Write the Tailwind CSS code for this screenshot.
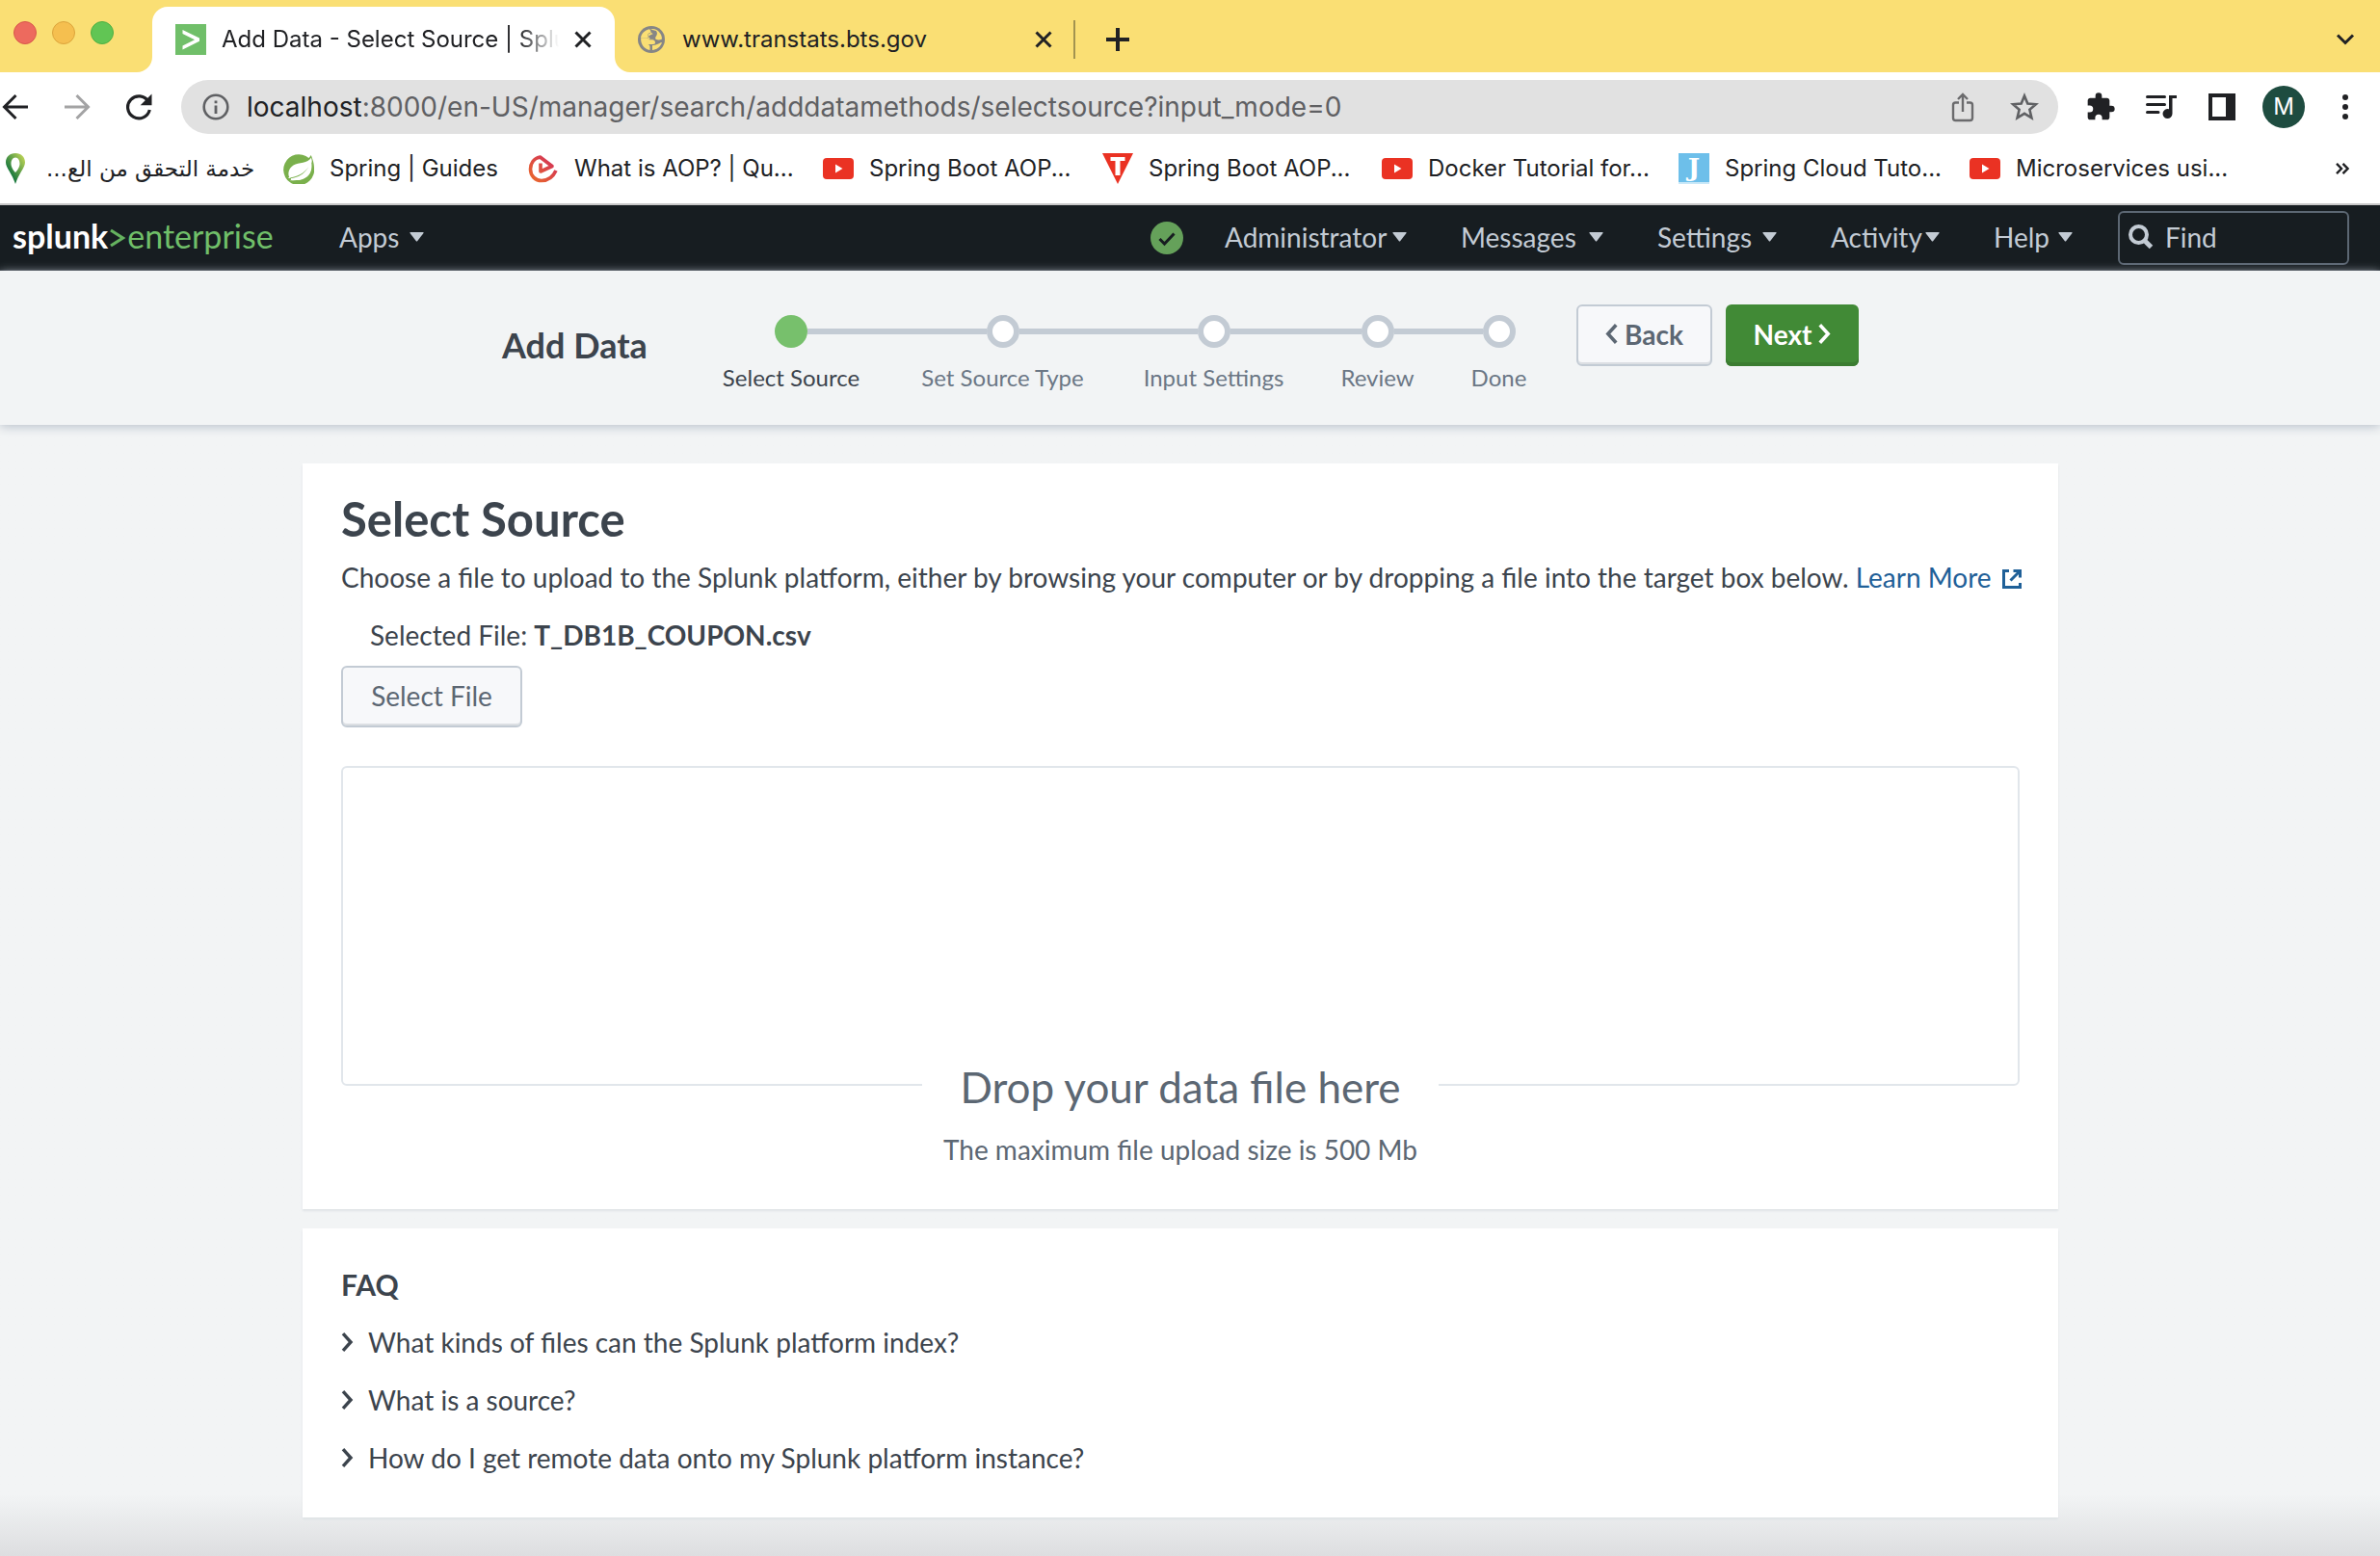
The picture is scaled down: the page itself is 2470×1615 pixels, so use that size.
<!DOCTYPE html>
<html lang="en">
<head>
<meta charset="utf-8">
<title>Add Data - Select Source | Splunk</title>
<script src="https://cdn.jsdelivr.net/npm/@tailwindcss/browser@4"></script>
</head>
<body class="min-h-screen flex flex-col bg-[#f2f4f5] font-[Lato,sans-serif] text-[28px] leading-10 text-[#3c444d]">

<svg class="hidden">
  <symbol id="youtube" viewBox="0 0 32 32"><rect y="5" width="32" height="22" rx="4" fill="#ea3223"/><path d="M13 11.500v9l7.500-4.500z" fill="#fff"/></symbol>
  <symbol id="close" viewBox="0 0 18 18"><path d="M1.500 1.500l15 15M16.500 1.500l-15 15" stroke="#202124" stroke-width="3"/></symbol>
  <symbol id="caret" viewBox="0 0 15 10"><path d="M1 0h13q1 0 .5 1L8.300 9q-.8 1-1.600 0L.5 1Q0 0 1 0z" fill="#c3cbd4"/></symbol>
  <symbol id="chevron" viewBox="0 0 12 20"><path d="M1.500 1.200l8 8.800-8 8.800" fill="none" stroke="currentColor" stroke-width="3.400"/></symbol>
</svg>

<!-- Browser chrome -->
<div class="font-[Inter,sans-serif] text-[24px] text-[#202124]">
  <div class="flex items-end h-[75px] bg-[#fadf74]">
    <div class="flex gap-4 w-[142px] pl-[14px] pb-[29px]">
      <span class="size-6 rounded-full bg-[#ed6a5e] border border-[#d8574b]"></span>
      <span class="size-6 rounded-full bg-[#f5bf4f] border border-[#dca53c]"></span>
      <span class="size-6 rounded-full bg-[#61c554] border border-[#4fb042]"></span>
    </div>
    <svg class="size-4" viewBox="0 0 16 16"><path d="M16 0v16H0A16 16 0 0 0 16 0z" fill="#fff"/></svg>
    <div class="flex items-center w-[480px] h-[68px] rounded-t-2xl bg-white px-6">
      <svg class="size-8 shrink-0" viewBox="0 0 32 32"><path d="M0 0h32v32H0z" fill="#70bf69"/><path d="M7.500 6L25 14.500v3.200L7.500 26.500v-4L20 16.200 7.500 10z" fill="#fff"/></svg>
      <span class="ml-4 flex-1 overflow-hidden whitespace-nowrap mask-r-from-88%">Add Data - Select Source | Splunk</span>
      <button class="ml-4 flex" aria-label="Close tab"><svg class="size-[18px]"><use href="#close"/></svg></button>
    </div>
    <svg class="size-4" viewBox="0 0 16 16"><path d="M0 0v16h16A16 16 0 0 1 0 0z" fill="#fff"/></svg>
    <div class="flex items-center h-[68px] w-[462px] pl-2">
      <svg class="size-7" viewBox="0 0 28 28"><circle cx="14" cy="14" r="14" fill="#868686"/><path d="M15.500 3c-3 .3-3.500 1.500-2.500 3 .5 1 .3 2-1 2-1.500 0-1.500 1.500-.5 2.300.8.700.3 2.200-1.500 2.200L3.200 12.300C2.500 18.500 6.500 24.300 12.500 25v-3.200c0-1.300-.5-2.300-2-2.800l5.500 0c1.500 0 2-.8 2-2 0-1.600-1.300-2.800-3-2.800h-3.500c1-1.200 3.500-1.200 5-.7 3 .8 5.500 1.500 8.500 0C25 8 21 3.500 15.500 3z" fill="#fadf74"/><path d="M13 3.500c-1 1.500.5 4 3 4.500l-3.500 1.500c-1.500 1-1 3 .5 3.500l-3 .5h4c3 0 4.800 1.500 4.800 3.500s-1.300 3-2.800 3h-2.500V25c6.500.5 11.500-4.500 11.700-11-1 1.500-3.200 2-5.200 1s-2.500-3-1-4.500c1.500-2 1-4 0-5.500z" fill="#868686"/><path d="M12 3.300c-5 1-8.500 4.700-9 9l6 .2c2 0 2-1.500 1.500-2.500-.5-1.500.5-2.700 2-2.700S13.500 4.500 12 3.300zM18.500 19.500c-1.500.5-2.500.5-3.500.5V25c4-.3 8.500-3 10-8-2 0-3 1.500-6.500 2.500z" fill="#fadf74"/></svg>
      <span class="ml-[18px] flex-1">www.transtats.bts.gov</span>
      <button class="mr-[22px] flex" aria-label="Close tab"><svg class="size-[18px]"><use href="#close"/></svg></button>
      <span class="w-[2px] h-10 bg-[#a29350]"></span>
    </div>
    <button class="flex items-center h-[68px] ml-8" aria-label="New tab"><svg class="size-6" viewBox="0 0 24 24"><path d="M12 0v24M0 12h24" stroke="#202124" stroke-width="4"/></svg></button>
    <button class="flex items-center h-[68px] ml-auto mr-[26px]" aria-label="Search tabs"><svg class="w-5 h-3" viewBox="0 0 20 12"><path d="M2 1.500l8 8 8-8" fill="none" stroke="#202124" stroke-width="3"/></svg></button>
  </div>

  <div class="flex items-center h-[72px] bg-white pr-[33px]">
    <div class="flex items-center w-[188px] pl-[2px]">
      <button aria-label="Back"><svg class="size-7" viewBox="0 0 28 28"><path d="M14.500 2L2.500 14l12 12M2.500 14H27" fill="none" stroke="#202124" stroke-width="3"/></svg></button>
      <button class="ml-9" aria-label="Forward"><svg class="size-7" viewBox="0 0 28 28"><path d="M13.500 2l12 12-12 12M25.500 14H1" fill="none" stroke="#a3a3a4" stroke-width="3"/></svg></button>
      <button class="ml-9" aria-label="Reload"><svg class="size-7" viewBox="0 0 28 28"><path d="M24 8.500A11.500 11.500 0 1 0 25.300 17" fill="none" stroke="#202124" stroke-width="3.200"/><path d="M27.500.5v11.800H15.700z" fill="#202124"/></svg></button>
    </div>
    <div class="flex flex-1 items-center h-14 rounded-full bg-[#e1e1e1] pl-[22px] pr-5 text-[28px] text-[#5f6063]">
      <svg class="size-7" viewBox="0 0 28 28"><circle cx="14" cy="14" r="12.300" fill="none" stroke="#5f6063" stroke-width="2.600"/><path d="M12.600 12.500h2.800V21h-2.800zM12.600 7.500h2.800v2.800h-2.800z" fill="#5f6063"/></svg>
      <span class="ml-[18px] flex-1"><span class="text-[#202124]">localhost</span>:8000/en-US/manager/search/adddatamethods/selectsource?input_mode=0</span>
      <button aria-label="Share"><svg class="w-6 h-8" viewBox="0 0 24 32"><path d="M8 11.500H4.500A2.500 2.500 0 0 0 2 14v13.500A2.500 2.500 0 0 0 4.500 30h15a2.500 2.500 0 0 0 2.500-2.500V14a2.500 2.500 0 0 0-2.500-2.500H16M12 21V3M7 8l5-5 5 5" fill="none" stroke="#6b6b6d" stroke-width="2.400"/></svg></button>
      <button class="ml-[37px]" aria-label="Bookmark"><svg class="size-[30px]" viewBox="0 0 30 30"><path d="M15 3.500l3.300 8 8.700.7-6.600 5.600 2 8.500L15 21.800l-7.400 4.500 2-8.500L3 12.200l8.700-.7z" fill="none" stroke="#5f6063" stroke-width="2.600"/></svg></button>
    </div>
    <button class="ml-[28px]" aria-label="Extensions"><svg class="size-8" viewBox="0 0 24 24"><path d="M20.500 11H19V7c0-1.100-.9-2-2-2h-4V3.500a2.500 2.500 0 0 0-5 0V5H4c-1.100 0-2 .9-2 2v3.800h1.500a2.700 2.700 0 0 1 0 5.400H2V20c0 1.100.9 2 2 2h3.800v-1.500a2.700 2.700 0 0 1 5.400 0V22H17c1.100 0 2-.9 2-2v-4h1.500a2.500 2.500 0 0 0 0-5z" fill="#202124"/></svg></button>
    <button class="ml-[30px]" aria-label="Media controls"><svg class="w-[34px] h-7" viewBox="0 0 34 28"><path d="M2.500 3.500h18M2.500 11.500h18M2.500 19.500h11.500" stroke="#202124" stroke-width="3" stroke-linecap="round"/><path d="M25 2h8v3H28.500V21a5 5 0 1 1-3.500-4.800z" fill="#202124"/></svg></button>
    <button class="ml-8" aria-label="Side panel"><svg class="size-7" viewBox="0 0 28 28"><path d="M0 0h28v28H0z" fill="#202124"/><path d="M4 4h14v20H4z" fill="#fff"/></svg></button>
    <button class="ml-7 size-11 rounded-full bg-[#1e4c40] text-white text-[24px] leading-[44px]">M</button>
    <button class="ml-[39px]" aria-label="Menu"><svg class="w-[6px] h-7" viewBox="0 0 6 28"><g fill="#202124"><circle cx="3" cy="4" r="3"/><circle cx="3" cy="14" r="3"/><circle cx="3" cy="24" r="3"/></g></svg></button>
  </div>

  <nav class="flex items-center h-[66px] pb-[12px] pt-1 bg-white border-b-2 border-[#c8c8c8] whitespace-nowrap" aria-label="Bookmarks">
    <a href="#" class="flex items-center gap-4 w-[294px]">
      <svg class="size-8" viewBox="0 0 32 32"><defs><linearGradient id="pin" x1="0" y1="1" x2="1" y2="0"><stop offset=".3" stop-color="#1c7a3e"/><stop offset="1" stop-color="#d3e05a"/></linearGradient></defs><path fill-rule="evenodd" d="M16 0c6 0 10 4 10 9.500S19 22 16 32C13 22 6 15 6 9.500S10 0 16 0zm0 4.500c-3 0-4.500 3-4.500 6.500s2.500 7 4.500 9c2-2 4.500-5.500 4.500-9S19 4.500 16 4.500z" fill="url(#pin)"/></svg>
      <span dir="rtl" class="font-['DejaVu_Sans',sans-serif] text-[23px]">خدمة التحقق من الع...</span>
    </a>
    <a href="#" class="flex items-center gap-4 w-[254px]">
      <svg class="size-8" viewBox="0 0 32 32"><path d="M28.800 2a14 14 0 0 1-2.300 3A16 16 0 1 0 32 15c0-4-1.500-9-3.200-13z" fill="#7ab04c"/><path d="M29 4.500C25.500 11 16 9 10.500 12.500 5 16 4.500 22 6.500 25.500 14 24.500 22 21 26.500 14 22.500 21.500 15 26 7.500 27.200c7 1.800 15.500.8 20-5.700C31 16 30.500 10.500 29 4.500z" fill="#fff"/><path d="M5 26a1.600 1.600 0 1 1 2 2.300C12 29 22 27.500 26 22c3-4.500 3.200-9.500 2.700-14-1 4-2.200 7-4.700 10C19 23.500 12 26.500 5 26z" fill="#fff"/><path d="M8 28.500c7.500 1 14.500-.5 18.500-5.500 3.500-4.500 3.300-10 2.500-15 2 4 3 8 2.500 11C30 27 23 32 16 32c-3 0-6-1.500-8-3.500z" fill="#7ab04c"/></svg>
      <span>Spring | Guides</span>
    </a>
    <a href="#" class="flex items-center gap-4 w-[306px]">
      <svg class="size-8" viewBox="0 0 32 32"><defs><linearGradient id="q" x1="0" y1="1" x2="1" y2="0"><stop offset="0" stop-color="#ea6a2c"/><stop offset="1" stop-color="#d02c5c"/></linearGradient></defs><path d="M13 10.500v8.500l12-5.500L12.500 4C5.500 5.500 2.500 11 2.500 16.500c0 7 5 12 11.500 12 7 0 12-4 15-10.500" fill="none" stroke="url(#q)" stroke-width="3.600" stroke-linejoin="round"/></svg>
      <span>What is AOP? | Qu...</span>
    </a>
    <a href="#" class="flex items-center gap-4 w-[290px]"><svg class="size-8"><use href="#youtube"/></svg><span>Spring Boot AOP...</span></a>
    <a href="#" class="flex items-center gap-4 w-[290px]">
      <svg class="size-8" viewBox="0 0 32 32"><path d="M0 0h32L16 32z" fill="#ea3223"/><path d="M8.500 4h15v4h-5v15h-5V8h-5z" fill="#fff"/></svg>
      <span>Spring Boot AOP...</span>
    </a>
    <a href="#" class="flex items-center gap-4 w-[308px]"><svg class="size-8"><use href="#youtube"/></svg><span>Docker Tutorial for...</span></a>
    <a href="#" class="flex items-center gap-4 w-[302px]">
      <span class="flex items-center justify-center size-8 bg-[#6dbfea] border-b-2 border-[#c9e8f8] font-['DejaVu_Serif',serif] font-bold text-[26px] leading-7 text-white">J</span>
      <span>Spring Cloud Tuto...</span>
    </a>
    <a href="#" class="flex items-center gap-4"><svg class="size-8"><use href="#youtube"/></svg><span>Microservices usi...</span></a>
    <button class="ml-auto mr-8" aria-label="More bookmarks"><svg class="w-[14px] h-3" viewBox="0 0 14 12"><path d="M1 .8L6 6l-5 5.200M7.500.8l5 5.200-5 5.200" fill="none" stroke="#202124" stroke-width="2.400"/></svg></button>
  </nav>
</div>

<!-- Splunk bar -->
<header class="flex items-center h-[68px] bg-[#171d21] border-b border-[#31373e] pl-[13px] pr-8 text-[#c3cbd4]">
  <a href="#" class="flex items-center w-[339px] pb-[3px] text-[34px]">
    <span class="font-bold text-white">splunk</span>
    <svg class="w-5 h-6 mt-1" viewBox="0 0 20 24"><path d="M3 4l12.500 8L3 20" fill="none" stroke="#65b25f" stroke-width="3.200"/></svg>
    <span class="text-[#70bf69]">enterprise</span>
  </a>
  <button class="flex items-center justify-between w-[88px] pb-[2px]">Apps<svg class="w-[15px] h-[10px]"><use href="#caret"/></svg></button>
  <svg class="size-[34px] ml-auto" viewBox="0 0 34 34"><circle cx="17" cy="17" r="17" fill="#65a15a"/><path d="M9.500 18l5 5 10-10.500" fill="none" stroke="#171d21" stroke-width="3"/></svg>
  <nav class="flex gap-14 ml-[43px] mr-[47px] pb-[2px]">
    <button class="flex items-center justify-between w-[189px]">Administrator<svg class="w-[15px] h-[10px]"><use href="#caret"/></svg></button>
    <button class="flex items-center justify-between w-[148px]">Messages<svg class="w-[15px] h-[10px]"><use href="#caret"/></svg></button>
    <button class="flex items-center justify-between w-[124px]">Settings<svg class="w-[15px] h-[10px]"><use href="#caret"/></svg></button>
    <button class="flex items-center justify-between w-[113px]">Activity<svg class="w-[15px] h-[10px]"><use href="#caret"/></svg></button>
    <button class="flex items-center justify-between w-[82px]">Help<svg class="w-[15px] h-[10px]"><use href="#caret"/></svg></button>
  </nav>
  <label class="flex items-center w-60 h-14 border-2 border-[#5c6773] rounded-md pl-[9px] pb-[2px]">
    <svg class="size-[26px] shrink-0" viewBox="0 0 26 26"><circle cx="10.500" cy="10.500" r="8.500" fill="none" stroke="#c3cbd4" stroke-width="4"/><path d="M16.500 16.500l7 7" stroke="#c3cbd4" stroke-width="5"/></svg>
    <input class="ml-3 w-full min-w-0 bg-transparent outline-none placeholder:text-[#c3cbd4]" type="text" placeholder="Find" aria-label="Find">
  </label>
</header>

<!-- Wizard header -->
<section class="flex justify-center h-40 pr-5 pt-[35px] whitespace-nowrap shadow-[0_2px_10px_#b9c1cb]">
  <h2 class="w-[197px] pt-[22px] text-[36px] font-bold">Add Data</h2>
  <ol class="flex pt-[11px] text-[24px] text-[#6b7785]">
    <li class="w-[206px] text-[#3c444d]">
      <div class="flex items-center"><span class="flex-1"></span><span class="size-[34px] rounded-full bg-[#77c06c]"></span><span class="flex-1 h-[6px] bg-[#c3cbd4]"></span></div>
      <div class="mt-[11px] text-center">Select Source</div>
    </li>
    <li class="w-[233px]">
      <div class="flex items-center"><span class="flex-1 h-[6px] bg-[#c3cbd4]"></span><span class="size-[34px] rounded-full bg-white border-6 border-[#c3cbd4]"></span><span class="flex-1 h-[6px] bg-[#c3cbd4]"></span></div>
      <div class="mt-[11px] text-center">Set Source Type</div>
    </li>
    <li class="w-[205px]">
      <div class="flex items-center"><span class="flex-1 h-[6px] bg-[#c3cbd4]"></span><span class="size-[34px] rounded-full bg-white border-6 border-[#c3cbd4]"></span><span class="flex-1 h-[6px] bg-[#c3cbd4]"></span></div>
      <div class="mt-[11px] text-center">Input Settings</div>
    </li>
    <li class="w-[135px]">
      <div class="flex items-center"><span class="flex-1 h-[6px] bg-[#c3cbd4]"></span><span class="size-[34px] rounded-full bg-white border-6 border-[#c3cbd4]"></span><span class="flex-1 h-[6px] bg-[#c3cbd4]"></span></div>
      <div class="mt-[11px] text-center">Review</div>
    </li>
    <li class="w-[117px]">
      <div class="flex items-center"><span class="flex-1 h-[6px] bg-[#c3cbd4]"></span><span class="size-[34px] rounded-full bg-white border-6 border-[#c3cbd4]"></span><span class="flex-1"></span></div>
      <div class="mt-[11px] text-center">Done</div>
    </li>
  </ol>
  <button class="flex items-center justify-center gap-[7px] ml-[22px] w-[141px] h-16 pb-[3px] rounded-md border-2 border-[#c3cbd4] bg-[#f7f8fa] font-bold text-[#5c6773] shadow-[inset_0_-2px_0_#dcdfe3]"><svg class="w-[13px] h-[21px] rotate-180"><use href="#chevron"/></svg>Back</button>
  <button class="flex items-center justify-center gap-[7px] ml-[14px] w-[138px] h-16 pb-[3px] rounded-md bg-[#418a36] font-bold text-white shadow-[inset_0_-4px_0_#3b7c31]">Next<svg class="w-[13px] h-[21px]"><use href="#chevron"/></svg></button>
</section>

<main class="flex-1 pr-5 pt-10 pb-10 bg-linear-to-t from-[#dddee0] via-[#f2f4f5] via-[64px] to-[#f2f4f5] z-[-1]">
  <div class="max-w-[1822px] mx-auto flex flex-col gap-5">
    <section class="bg-white px-10 pt-[29px] pb-[42px] shadow-[0_2px_2px_#dfe3e6]">
      <h1 class="text-[49px] leading-14 font-bold">Select Source</h1>
      <p class="mt-[13px] whitespace-nowrap">Choose a file to upload to the Splunk platform, either by browsing your computer or by dropping a file into the target box below. <a href="#" class="text-[#1f6098]">Learn More <svg class="inline size-5 ml-1 align-[-1px]" viewBox="0 0 20 20"><path d="M7 1.500H1.500v17h17V14M11.500 1.500h7v7M18 2L8.500 11.500" fill="none" stroke="currentColor" stroke-width="3"/></svg></a></p>
      <p class="mt-5 pl-[30px]">Selected File: <b>T_DB1B_COUPON.csv</b></p>
      <button class="mt-3 block w-[188px] h-16 pb-[2px] rounded-md border-2 border-[#c3cbd4] bg-[#f7f8fa] text-[#5c6773] shadow-[inset_0_-2px_0_#dcdfe3]">Select File</button>
      <div class="mt-10 h-[332px] rounded-md border-2 border-[#e1e6eb]"></div>
      <div class="-mt-[27px] text-center text-[#5c6773]">
        <p class="relative w-[536px] mx-auto bg-white text-[44px] leading-14">Drop your data file here</p>
        <p class="mt-[17px]">The maximum file upload size is 500 Mb</p>
      </div>
    </section>
    <section class="flex flex-col items-start gap-5 bg-white px-10 pt-[38px] pb-[42px] shadow-[0_2px_2px_#dfe3e6]">
      <h3 class="text-[30px] font-bold">FAQ</h3>
      <button class="flex items-center gap-[15px]"><svg class="w-[13px] h-5"><use href="#chevron"/></svg>What kinds of files can the Splunk platform index?</button>
      <button class="flex items-center gap-[15px]"><svg class="w-[13px] h-5"><use href="#chevron"/></svg>What is a source?</button>
      <button class="flex items-center gap-[15px]"><svg class="w-[13px] h-5"><use href="#chevron"/></svg>How do I get remote data onto my Splunk platform instance?</button>
    </section>
  </div>
</main>
</body>
</html>
